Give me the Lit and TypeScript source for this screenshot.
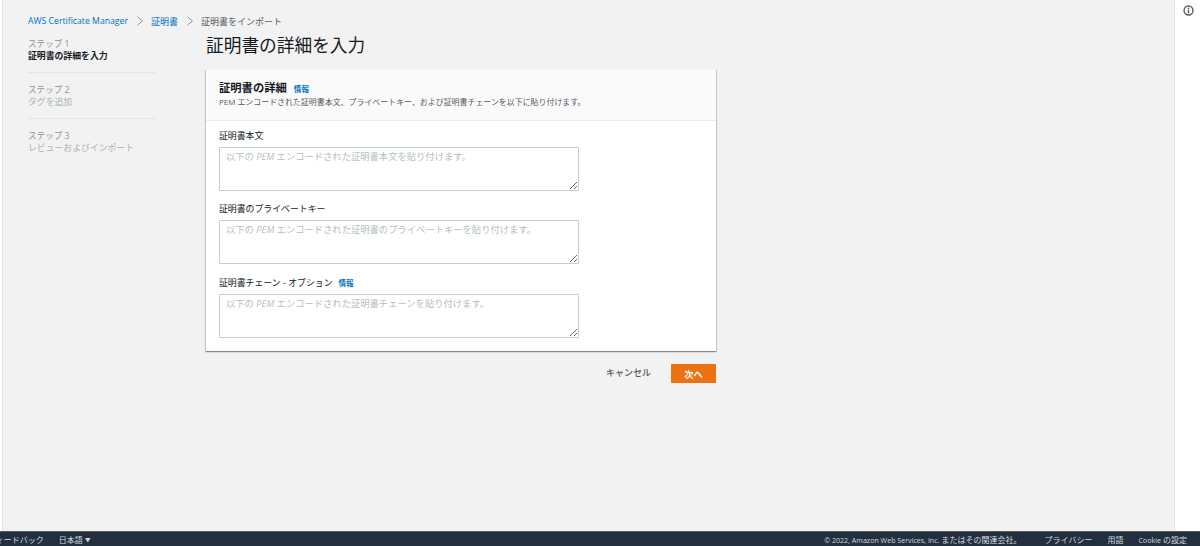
import { LitElement, html, css } from 'lit';
import { customElement } from 'lit/decorators.js';

const fields = [
  { label: '証明書本文', target: '証明書本文', info: false },
  { label: '証明書のプライベートキー', target: '証明書のプライベートキー', info: false },
  { label: '証明書チェーン - オプション', target: '証明書チェーン', info: true }
];

const steps = [
  { step: 'ステップ 1', title: '証明書の詳細を入力', active: true },
  { step: 'ステップ 2', title: 'タグを追加', active: false },
  { step: 'ステップ 3', title: 'レビューおよびインポート', active: false }
];

@customElement('app-root')
export class AppRoot extends LitElement {
  static styles = css`
    :host {
      display: flex;
      flex-direction: column;
      width: 1200px;
      height: 546px;
      overflow: hidden;
      background: #fff;
      color: #16191f;
      font-family: 'Open Sans', 'Noto Sans CJK JP', sans-serif;
      font-size: 9.3px;
    }
    a {
      color: #0073bb;
      text-decoration: none;
    }
    .body {
      flex: 1;
      display: flex;
      min-height: 0;
    }
    .content {
      flex: 1;
      margin-left: 2px;
      padding: 15px 0 0 25px;
      background: #f2f2f2;
      border-left: 1px solid #e3e5e5;
      border-right: 1px solid #e3e5e5;
    }
    .tools {
      width: 25px;
      display: flex;
      justify-content: center;
      padding-top: 5px;
    }
    .tools svg {
      width: 11px;
      height: 11px;
      margin-left: 2px;
    }
    .crumbs {
      display: flex;
      align-items: center;
      height: 12px;
      font-size: 9px;
      color: #545b64;
    }
    .crumbs .service {
      font-size: 8.7px;
    }
    .crumbs svg {
      width: 8px;
      height: 10px;
      margin: 0 7px 0 8px;
    }
    .layout {
      display: flex;
      margin-top: 3px;
    }
    .steps {
      width: 127px;
      margin-right: 51px;
      padding-top: 5px;
    }
    .step {
      height: 46px;
      box-sizing: border-box;
      padding-top: 3px;
      border-bottom: 1px solid #e3e5e5;
      color: #aab7b8;
      font-size: 8.85px;
      line-height: 13.5px;
    }
    .step + .step {
      padding-top: 11px;
    }
    .step:last-child {
      border-bottom: none;
    }
    .step small {
      display: block;
      height: 12px;
      line-height: 12px;
      font-size: 8.6px;
      color: #879596;
    }
    .step.active {
      color: #16191f;
      font-weight: 700;
      height: 38px;
    }
    .step.active small {
      font-weight: 400;
    }
    .main {
      width: 510px;
    }
    h1 {
      margin: 0;
      height: 39px;
      font-size: 17.7px;
      font-weight: 400;
      line-height: 30px;
    }
    .card {
      background: #fff;
      box-shadow: 0 1px 1px 0 rgba(0, 28, 36, 0.3), 1px 1px 1px 0 rgba(0, 28, 36, 0.15), -1px 1px 1px 0 rgba(0, 28, 36, 0.15);
      height: 282px;
    }
    .card-head {
      height: 52px;
      box-sizing: border-box;
      padding: 11px 13px 0;
      background: #fafafa;
      border-bottom: 1px solid #eaeded;
    }
    .card-title {
      display: flex;
      align-items: baseline;
      gap: 7px;
      height: 16px;
      line-height: 16px;
    }
    h2 {
      margin: 0;
      font-size: 11.3px;
      font-weight: 700;
    }
    .info {
      font-size: 7.6px;
      font-weight: 700;
    }
    .card-head p {
      margin: 0;
      font-size: 7.95px;
      line-height: 13px;
      color: #545b64;
    }
    .fields {
      padding: 7px 13px 0;
    }
    .field {
      height: 73.4px;
    }
    .field label {
      display: flex;
      align-items: baseline;
      gap: 6px;
      height: 19px;
      font-size: 8.9px;
      line-height: 15px;
    }
    .box {
      position: relative;
      width: 360px;
      height: 44px;
    }
    textarea {
      display: block;
      box-sizing: border-box;
      width: 360px;
      height: 44px;
      margin: 0;
      padding: 0;
      border: 1px solid #c5cdcd;
      border-radius: 1px;
      background: #fff;
      outline: none;
    }
    .hint {
      position: absolute;
      left: 7px;
      top: 3px;
      line-height: 13px;
      color: #b5c0c1;
      pointer-events: none;
    }
    .actions {
      display: flex;
      justify-content: flex-end;
      align-items: center;
      gap: 20px;
      margin-top: 13px;
    }
    .cancel {
      font-size: 9px;
      font-weight: 500;
      color: #545b64;
      padding-bottom: 2px;
    }
    .next {
      width: 45px;
      height: 19px;
      padding: 0;
      border: none;
      border-radius: 1px;
      background: #ec7211;
      color: #fff;
      font: inherit;
      font-weight: 700;
    }
    footer {
      height: 15px;
      display: flex;
      align-items: center;
      padding-top: 1px;
      background: #232f3e;
      border-top: 1px solid #545b64;
      box-sizing: border-box;
      color: #d5dbdb;
      font-size: 8px;
      white-space: nowrap;
    }
    .feedback {
      margin-left: -12px;
    }
    .lang {
      margin-left: 15px;
    }
    .caret {
      font-size: 5.5px;
      vertical-align: 1px;
    }
    .legal {
      margin-left: auto;
      display: flex;
      margin-right: 13px;
    }
    .latin {
      font-size: 7.1px;
    }
    .privacy { margin-left: 23px; }
    .terms { margin-left: 15px; }
    .cookie { margin-left: 15px; }
  `;

  private renderChevron() {
    return html`<svg viewBox="0 0 8 10" fill="none" stroke="#879596" stroke-width="1"><path d="M1.5 .8 6.5 5 1.5 9.2"/></svg>`;
  }

  private renderField(f: { label: string; target: string; info: boolean }) {
    return html`
      <div class="field">
        <label>${f.label}${f.info ? html`<a class="info" href="#">情報</a>` : ''}</label>
        <div class="box">
          <textarea aria-label=${f.label}></textarea>
          <span class="hint">以下の <i>PEM</i> エンコードされた${f.target}を貼り付けます。</span>
        </div>
      </div>
    `;
  }

  render() {
    return html`
      <div class="body">
        <div class="content">
          <nav class="crumbs">
            <a class="service" href="#">AWS Certificate Manager</a>
            ${this.renderChevron()}
            <a href="#">証明書</a>
            ${this.renderChevron()}
            <span>証明書をインポート</span>
          </nav>
          <div class="layout">
            <div class="steps">
              ${steps.map(s => html`
                <div class="step ${s.active ? 'active' : ''}">
                  <small>${s.step}</small>${s.title}
                </div>
              `)}
            </div>
            <div class="main">
              <h1>証明書の詳細を入力</h1>
              <section class="card">
                <div class="card-head">
                  <div class="card-title">
                    <h2>証明書の詳細</h2>
                    <a class="info" href="#">情報</a>
                  </div>
                  <p>PEM エンコードされた証明書本文、プライベートキー、および証明書チェーンを以下に貼り付けます。</p>
                </div>
                <div class="fields">${fields.map(f => this.renderField(f))}</div>
              </section>
              <div class="actions">
                <span class="cancel">キャンセル</span>
                <button class="next">次へ</button>
              </div>
            </div>
          </div>
        </div>
        <aside class="tools">
          <svg viewBox="0 0 16 16" fill="none" stroke="#545b64" stroke-width="2">
            <circle cx="8" cy="8" r="6.5"/>
            <path d="M8 7v5M8 4v2"/>
          </svg>
        </aside>
      </div>
      <footer>
        <span class="feedback">フィードバック</span>
        <span class="lang">日本語 <span class="caret">▼</span></span>
        <div class="legal">
          <span><span class="latin">© 2022, Amazon Web Services, Inc.</span> またはその関連会社。</span>
          <span class="privacy">プライバシー</span>
          <span class="terms">用語</span>
          <span class="cookie"><span class="latin">Cookie</span> の設定</span>
        </div>
      </footer>
    `;
  }
}
